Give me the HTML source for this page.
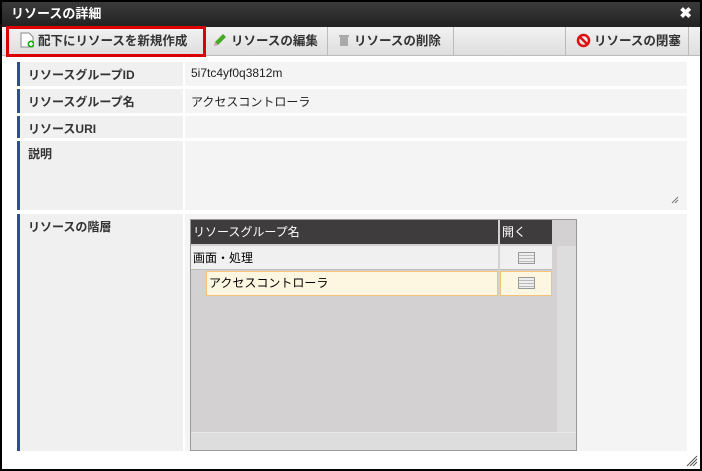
<!DOCTYPE html>
<html><head><meta charset="utf-8"><style>
*{margin:0;padding:0;box-sizing:border-box}
body{width:702px;height:471px;background:#000;font-family:"Liberation Sans","Noto Sans CJK JP",sans-serif;font-size:12px;position:relative;overflow:hidden}
.win{position:absolute;left:2px;top:2px;width:698px;height:467px;background:#fff}
.title{position:absolute;left:0;top:0;width:698px;height:25px;background:linear-gradient(#3a3a3a,#222);color:#fff;font-weight:bold;font-size:13px;line-height:24px;padding-left:9px}
.x{position:absolute;right:8px;top:0;font-size:15px}
.tb{position:absolute;left:0;top:25px;width:698px;height:29px;background:linear-gradient(#f2f2f2,#dedede);border-bottom:1px solid #bbb}
.btn{position:absolute;top:0;height:28px;line-height:28px;font-weight:bold;color:#333;border-right:1px solid #bbb;font-size:12.5px}
.red{position:absolute;left:4px;top:24px;width:200px;height:31px;border:3px solid #d00;}
.row{position:absolute;left:15px;width:670px}
.lab{position:absolute;left:0;top:0;bottom:0;width:166px;background:#f0f0f0;border-left:3px solid #2f4f8f;font-weight:bold;color:#333;padding:4px 0 0 8px}
.val{position:absolute;left:168px;right:0;top:0;bottom:0;background:#f4f4f4;padding:4px 0 0 6px;color:#222}
.tbl{position:absolute;left:188px;top:217px;width:387px;height:232px;background:#d3d1d2;border:1px solid #999}
.ico{margin:6px auto;width:17px;height:12px;border:1px solid #999;background:repeating-linear-gradient(#eee 0 2px,#bbb 2px 3px)}
</style></head><body><div class="win">
<div class="title">リソースの詳細<span class="x">✖</span></div>
<div class="tb">
<div class="btn" style="left:0;width:202px;padding-left:18px"><svg width="14" height="16" style="vertical-align:-3px;margin-right:4px"><path d="M1 1h8l4 4v10H1z" fill="#fff" stroke="#888"/><circle cx="11" cy="12" r="3.5" fill="#2a2"/><path d="M9 12h4M11 10v4" stroke="#fff" stroke-width="1.5"/></svg>配下にリソースを新規作成</div>
<div class="btn" style="left:202px;width:124px;padding-left:8px"><svg width="16" height="16" style="vertical-align:-3px;margin-right:3px"><path d="M2 14l1-4 8-8 3 3-8 8z" fill="#4a2"/><path d="M2 14l1-4 3 3z" fill="#e9c"/></svg>リソースの編集</div>
<div class="btn" style="left:326px;width:126px;padding-left:10px"><svg width="12" height="14" style="vertical-align:-2px;margin-right:4px"><path d="M1 2h10v2H1zM2 4h8v9H2z" fill="#aaa"/></svg>リソースの削除</div>
<div class="btn" style="left:452px;width:112px"></div>
<div class="btn" style="left:564px;width:123px;padding-left:10px"><svg width="15" height="15" style="vertical-align:-3px;margin-right:3px"><circle cx="7.5" cy="7.5" r="5.5" fill="none" stroke="#d11" stroke-width="2.5"/><path d="M4 4l7 7" stroke="#d11" stroke-width="2.5"/></svg>リソースの閉塞</div>
</div>
<div class="red"></div>
<div class="row" style="top:60px;height:24px"><div class="lab">リソースグループID</div><div class="val">5i7tc4yf0q3812m</div></div>
<div class="row" style="top:87px;height:24px"><div class="lab">リソースグループ名</div><div class="val">アクセスコントローラ</div></div>
<div class="row" style="top:114px;height:22px"><div class="lab">リソースURI</div><div class="val"></div></div>
<div class="row" style="top:139px;height:69px"><div class="lab">説明</div><div class="val"><svg width="8" height="8" style="position:absolute;right:8px;bottom:6px"><path d="M1 7l6-6M4 7l3-3" stroke="#777"/></svg></div></div>
<div class="row" style="top:212px;height:237px"><div class="lab">リソースの階層</div><div class="val" style="background:#f4f4f4"></div></div>
<div class="tbl">
<div style="position:absolute;left:0;top:0;width:307px;height:24px;background:#3e3c3d;color:#fff;line-height:24px;padding-left:2px">リソースグループ名</div>
<div style="position:absolute;left:309px;top:0;width:52px;height:24px;background:#3e3c3d;color:#fff;line-height:24px;padding-left:2px">開く</div>
<div style="position:absolute;left:0;top:26px;width:307px;height:24px;background:#f0f0f0;line-height:24px;padding-left:2px;border-bottom:1px solid #bbb">画面・処理</div>
<div style="position:absolute;left:309px;top:26px;width:52px;height:24px;background:#f0f0f0;border-bottom:1px solid #bbb"><div class="ico"></div></div>
<div style="position:absolute;left:15px;top:51px;width:292px;height:25px;background:#fdf6e0;border:1px solid #f5c27a;line-height:23px;padding-left:2px">アクセスコントローラ</div>
<div style="position:absolute;left:309px;top:51px;width:52px;height:25px;background:#fdf6e0;border:1px solid #f5c27a"><div class="ico" style="margin-top:5px"></div></div>
<div style="position:absolute;left:366px;top:26px;width:19px;height:186px;background:#ddd"></div>
<div style="position:absolute;left:0;top:212px;width:385px;height:18px;background:#ddd;border-top:1px solid #e8e8e8"></div>
</div>
<svg width="12" height="12" style="position:absolute;right:2px;bottom:2px"><path d="M1 11l10-10M4 11l7-7M7 11l4-4" stroke="#555"/></svg>
</div></body></html>
